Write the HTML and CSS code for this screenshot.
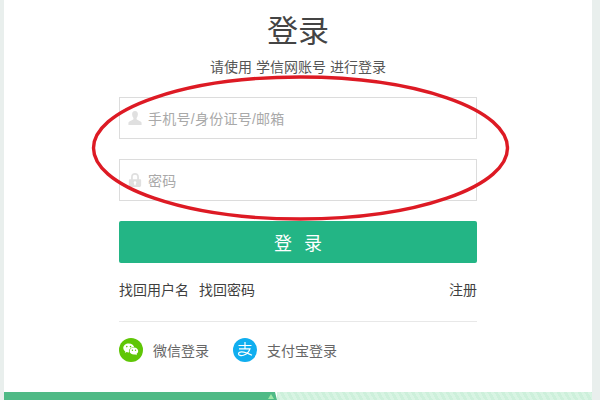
FILE: index.html
```html
<!DOCTYPE html>
<html lang="zh-CN">
<head>
<meta charset="utf-8">
<title>登录</title>
<link rel="stylesheet" href="styles.css">
</head>
<body>
<div class="page">
  <main class="card">
    <section class="form">
      <h1 class="title">登录</h1>
      <p class="subtitle">请使用 学信网账号 进行登录</p>
      <div class="field">
        <svg class="field-icon" viewBox="0 0 16 16"><path d="M8 0C5.600 0 4.600 1.800 4.700 3.900c.1 1.700.6 3 1.500 4v1.500C5 10.600 1.500 11.300 .5 13v3h15v-3c-1-1.700-4.500-2.400-5.700-3.600V7.900c.9-1 1.400-2.300 1.500-4C11.400 1.800 10.400 0 8 0z"/></svg>
        <span class="placeholder">手机号/身份证号/邮箱</span>
      </div>
      <div class="field">
        <svg class="field-icon" viewBox="0 0 16 16"><path fill-rule="evenodd" d="M8 0C5.200 0 3.500 1.800 3.500 4.500V7H2.500C1.500 7 1 7.500 1 8v6c0 1 .8 2 1.800 2h10.400c1 0 1.800-1 1.800-2V8c0-.5-.5-1-1.500-1h-1V4.500C12.500 1.800 10.800 0 8 0zM5.500 7V4.500C5.500 3 6.400 2 8 2s2.500 1 2.500 2.500V7zM8 9.500a1.500 1.500 0 0 1 .8 2.800V14H7.200v-1.700A1.500 1.500 0 0 1 8 9.500z"/></svg>
        <span class="placeholder">密码</span>
      </div>
      <button class="submit" type="button">登 录</button>
      <div class="links">
        <div class="links-left"><span>找回用户名</span><span>找回密码</span></div>
        <span>注册</span>
      </div>
      <div class="social">
        <div class="social-item">
          <svg class="social-icon" viewBox="0 0 24 24">
            <circle cx="12" cy="12" r="12" fill="#5fc606"/>
            <path fill="#fff" d="M9.700 5.500c-3 0-5.400 2-5.400 4.500 0 1.400.8 2.700 2 3.500l-.5 1.600 1.800-1c.6.200 1.300.3 2 .3h.5c-.1-.4-.2-.7-.2-1.100 0-2.300 2.200-4.100 4.900-4.100h.4c-.5-2-2.600-3.700-5.500-3.700z"/>
            <path fill="#fff" d="M14.900 9.400c-2.400 0-4.300 1.600-4.300 3.600s1.900 3.600 4.300 3.600c.5 0 1-.1 1.500-.2l1.500.8-.4-1.300c1-.7 1.700-1.700 1.700-2.900 0-2-1.900-3.600-4.300-3.600z"/>
            <circle cx="7.800" cy="8.600" r=".8" fill="#5fc606"/><circle cx="11.500" cy="8.600" r=".8" fill="#5fc606"/>
            <circle cx="13.400" cy="12.300" r=".7" fill="#5fc606"/><circle cx="16.500" cy="12.300" r=".7" fill="#5fc606"/>
          </svg>
          <span>微信登录</span>
        </div>
        <div class="social-item">
          <svg class="social-icon" viewBox="0 0 24 24">
            <circle cx="12" cy="12" r="12" fill="#10aeef"/>
            <path fill="none" stroke="#fff" stroke-width="1.200" d="M5.500 7.500h13M12 4v6.800M6 10.800h11c-1 3-3.200 5.500-6.500 6.500-2.500.7-5 .2-5-1.500 0-2.200 4-3.300 13.500 1.500"/>
          </svg>
          <span>支付宝登录</span>
        </div>
      </div>
    </section>
    <div class="band">
      <div class="band-solid">
        <svg class="band-mark" viewBox="0 0 8 8"><path d="M4 2 7 7H1z"/></svg>
      </div>
      <div class="band-light"></div>
    </div>
  </main>
  <svg class="annotation" viewBox="0 0 600 400"><ellipse cx="300.500" cy="148" rx="207" ry="71"/></svg>
</div>
</body>
</html>
```

FILE: styles.css
```css
* { box-sizing: border-box; }
html, body { margin: 0; padding: 0; }
body {
  width: 600px;
  height: 400px;
  overflow: hidden;
  background: #e9efed;
  font-family: "Liberation Sans", "Noto Sans CJK SC", sans-serif;
}
.page {
  position: relative;
  width: 600px;
  height: 400px;
  padding: 0 8px 0 4px;
}
.card {
  height: 400px;
  background: #fff;
  display: flex;
  flex-direction: column;
}
.form {
  flex: 1;
  width: 358px;
  margin-left: 115px;
  display: flex;
  flex-direction: column;
}
.title {
  margin: 12px 0 0;
  height: 40px;
  line-height: 40px;
  font-size: 31px;
  font-weight: 400;
  color: #444;
  text-align: center;
}
.subtitle {
  margin: 6px 0 0;
  height: 18px;
  line-height: 18px;
  font-size: 14px;
  color: #555;
  text-align: center;
}
.field {
  height: 42px;
  margin-top: 20px;
  border: 1px solid #dcdcdc;
  display: flex;
  align-items: center;
  padding-left: 8px;
  gap: 6px;
}
.subtitle + .field { margin-top: 21px; }
.field-icon {
  width: 14px;
  height: 16px;
  fill: #e0e0e0;
  flex: none;
}
.placeholder {
  font-size: 14px;
  letter-spacing: 0.25px;
  color: #a9a9a9;
}
.submit {
  height: 42px;
  margin-top: 20px;
  border: 0;
  border-radius: 2px;
  background: #23b585;
  color: #fff;
  font-family: inherit;
  font-size: 18px;
  word-spacing: 7px;
  padding: 0;
}
.links {
  display: flex;
  justify-content: space-between;
  margin-top: 18px;
  height: 18px;
  line-height: 18px;
  font-size: 14px;
  color: #3f3f3f;
}
.links-left { display: flex; gap: 10px; }
.social {
  margin-top: 22px;
  border-top: 1px solid #e8e8e8;
  padding-top: 16px;
  display: flex;
  gap: 24px;
}
.social-item {
  display: flex;
  align-items: center;
  gap: 10px;
  font-size: 14px;
  color: #666;
}
.social-icon { width: 24px; height: 24px; flex: none; }
.band {
  height: 8px;
  display: flex;
}
.band-solid {
  width: 273px;
  background: #4fba86;
  display: flex;
  justify-content: flex-end;
  align-items: flex-end;
  padding-right: 2px;
  clip-path: polygon(0 0, 271px 0, 273px 100%, 0 100%);
}
.band-mark { width: 8px; height: 8px; fill: #9fe8a8; }
.band-light {
  flex: 1;
  background: repeating-linear-gradient(60deg, #cdf0db 0 3px, #d8f4e3 3px 6px);
}
.annotation {
  position: absolute;
  left: 0;
  top: 0;
  width: 600px;
  height: 400px;
  pointer-events: none;
}
.annotation ellipse {
  fill: none;
  stroke: #dd1a24;
  stroke-width: 3.4;
}
```
